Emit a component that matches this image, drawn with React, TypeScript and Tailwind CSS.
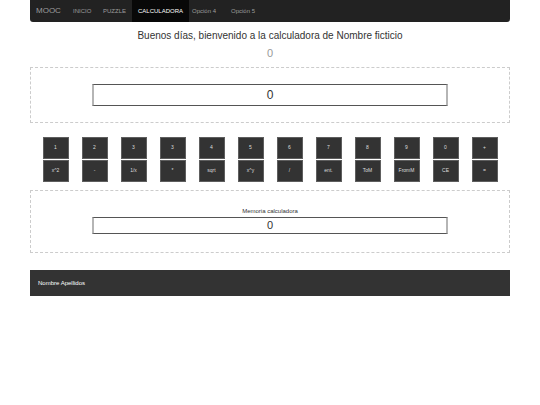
import React from "react";

const row1 = ["1", "2", "3", "3", "4", "5", "6", "7", "8", "9", "0", "+"];
const row2 = ["x^2", "-", "1/x", "*", "sqrt", "x^y", "/", "ent.", "ToM", "FromM", "CE", "="];

export default function App() {
  return (
    <div className="w-[540px] h-[405px] bg-white" style={{ fontFamily: '"Liberation Sans", Arial, sans-serif' }}>
      <div className="w-[480px] mx-auto">
        <nav className="h-[22px] bg-[#222222] rounded-b-[3px] flex items-stretch text-[#9d9d9d]">
          <div className="w-[36px] pl-[6px] flex items-center text-[8px]">MOOC</div>
          <div className="w-[32px] pl-[7px] flex items-center text-[6px]">INICIO</div>
          <div className="w-[34px] pl-[5px] flex items-center text-[6px]">PUZZLE</div>
          <div className="w-[57px] flex items-center justify-center bg-[#080808] text-white text-[6px]">CALCULADORA</div>
          <div className="w-[37px] pl-[3px] flex items-center text-[6px]">Opción 4</div>
          <div className="pl-[5px] flex items-center text-[6px]">Opción 5</div>
        </nav>
        <div className="mt-[8px] text-center text-[10px] leading-[12px] text-[#333]">
          Buenos días, bienvenido a la calculadora de Nombre ficticio
        </div>
        <div className="mt-[5px] text-center text-[11px] leading-[13px] text-[#999]">0</div>
        <div className="mt-[7px] h-[56px] border border-dashed border-[#cccccc] flex items-center justify-center">
          <div className="w-[356px] h-[22px] border-y border-y-[#555] border-x-2 border-x-[#b5b5b5] flex items-center justify-center text-[12px] text-[#333]">
            0
          </div>
        </div>
        <div className="mt-[14px] flex justify-center gap-[13px]">
          {row1.map((a, i) => (
            <div key={i} className="flex flex-col gap-[1px]">
              <div className="w-[26px] h-[22px] bg-[#333] border border-[#5e5e5e] flex items-center justify-center text-[5px] text-[#ddd]">
                {a}
              </div>
              <div className="w-[26px] h-[22px] bg-[#333] border border-[#5e5e5e] flex items-center justify-center text-[5px] text-[#ddd]">
                {row2[i]}
              </div>
            </div>
          ))}
        </div>
        <div className="mt-[8px] h-[63px] border border-dashed border-[#cccccc] flex flex-col items-center pt-[17px]">
          <div className="text-[6px] leading-[7px] text-[#333]">Memoria calculadora</div>
          <div className="mt-[2px] w-[356px] h-[17px] border-y border-y-[#555] border-x-2 border-x-[#b5b5b5] flex items-center justify-center text-[11px] text-[#333]">
            0
          </div>
        </div>
        <footer className="mt-[17px] h-[26px] bg-[#333] flex items-center pl-[8px] text-[6px] text-white">
          Nombre Apellidos
        </footer>
      </div>
    </div>
  );
}
